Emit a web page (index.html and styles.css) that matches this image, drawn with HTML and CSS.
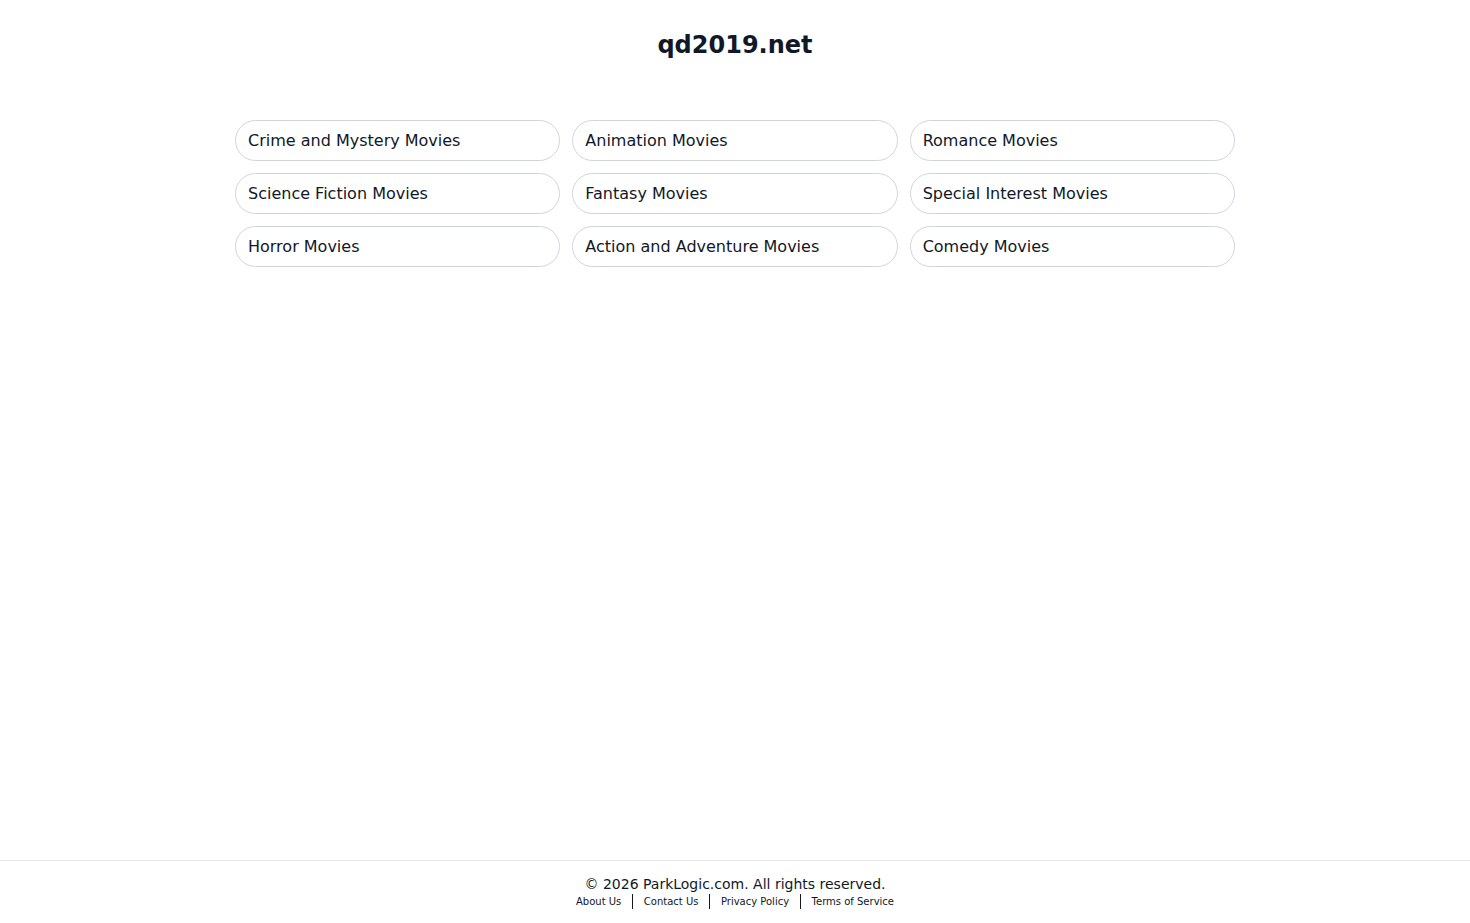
FILE: index.html
```html
<!DOCTYPE html>
<html lang="en">
<head>
<meta charset="utf-8">
<title>qd2019.net</title>
<link rel="stylesheet" href="styles.css">
</head>
<body>
<div class="page">
  <main class="main">
    <h1 class="title">qd2019.net</h1>
    <div class="grid">
      <a class="pill" href="#">Crime and Mystery Movies</a>
      <a class="pill" href="#">Animation Movies</a>
      <a class="pill" href="#">Romance Movies</a>
      <a class="pill" href="#">Science Fiction Movies</a>
      <a class="pill" href="#">Fantasy Movies</a>
      <a class="pill" href="#">Special Interest Movies</a>
      <a class="pill" href="#">Horror Movies</a>
      <a class="pill" href="#">Action and Adventure Movies</a>
      <a class="pill" href="#">Comedy Movies</a>
    </div>
  </main>
  <footer class="footer">
    <div class="copy">© 2026 ParkLogic.com. All rights reserved.</div>
    <nav class="links">
      <a href="#">About Us</a>
      <span class="sep"></span>
      <a href="#">Contact Us</a>
      <span class="sep"></span>
      <a href="#">Privacy Policy</a>
      <span class="sep"></span>
      <a href="#">Terms of Service</a>
    </nav>
  </footer>
</div>
</body>
</html>
```

FILE: styles.css
```css
* { box-sizing: border-box; }
html, body { margin: 0; padding: 0; background: #fff; }
body {
  font-family: "DejaVu Sans", Verdana, sans-serif;
  color: #111827;
}
.page {
  min-height: 100vh;
  display: flex;
  flex-direction: column;
}
.main {
  flex: 1;
  display: flex;
  flex-direction: column;
  align-items: center;
}
.title {
  margin: 29px 0 0;
  font-size: 24px;
  line-height: 32px;
  font-weight: bold;
  color: #111827;
}
.grid {
  margin-top: 59px;
  width: 1000px;
  display: grid;
  grid-template-columns: repeat(3, 1fr);
  column-gap: 12px;
  row-gap: 12px;
}
.pill {
  display: block;
  height: 41px;
  line-height: 39px;
  padding: 0 12px;
  border: 1px solid #d1d5db;
  border-radius: 9999px;
  font-size: 16px;
  color: #111827;
  text-decoration: none;
  white-space: nowrap;
}
.footer {
  border-top: 1px solid #e5e7eb;
  padding: 13px 0 14px;
  text-align: center;
}
.copy {
  font-size: 14px;
  line-height: 20px;
  color: #111827;
}
.links {
  display: flex;
  justify-content: center;
  align-items: center;
  font-size: 10px;
  line-height: 15px;
}
.links a {
  color: #111827;
  text-decoration: none;
}
.sep {
  width: 1.5px;
  height: 15px;
  background: #111827;
  margin: 0 10.5px;
}
```
